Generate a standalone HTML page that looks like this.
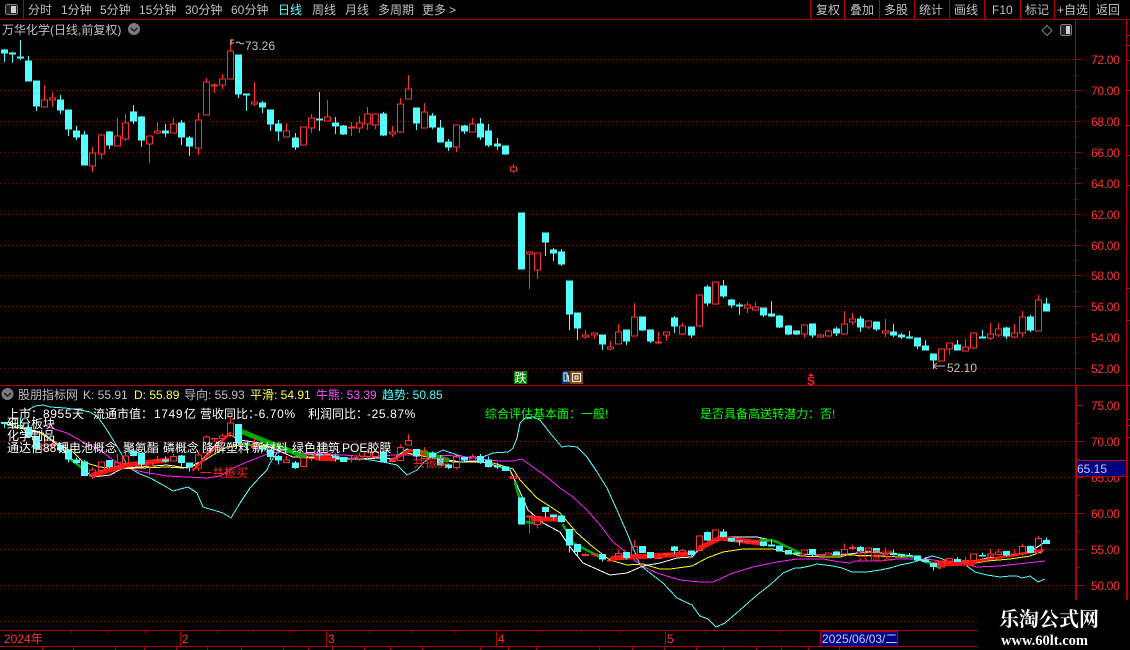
<!DOCTYPE html>
<html><head><meta charset="utf-8"><title>万华化学</title>
<style>
html,body{margin:0;padding:0;background:#000;width:1130px;height:650px;overflow:hidden}
svg{display:block}
text{font-family:"WenQuanYi Zen Hei","Liberation Sans","Noto Sans CJK SC",sans-serif;font-size:12px;white-space:pre}
.g{fill:#c0c0c0}.w{fill:#fff}.r{fill:#ff3232}.y{fill:#ffff54}.m{fill:#ff54ff}.c{fill:#54ffff}.l{fill:#00ff00}
.ln{fill:none;stroke-width:1;shape-rendering:crispEdges}
.gd{stroke:#8a0000;stroke-width:1;stroke-dasharray:1 3;shape-rendering:crispEdges}
.ax{stroke:#b00000;stroke-width:1;fill:none;shape-rendering:crispEdges}
.ns{vector-effect:non-scaling-stroke}
.ls{letter-spacing:.6px}
.al text{letter-spacing:-.3px}
</style></head><body>
<svg width="1130" height="650" viewBox="0 0 1130 650" xmlns="http://www.w3.org/2000/svg">
<rect width="1130" height="650" fill="#000"/>
<!-- grid -->
<path class="gd" d="M0 59.5H1075M0 90.5H1075M0 121.5H1075M0 152.5H1075M0 183.5H1075M0 214.5H1075M0 245.5H1075M0 275.5H1075M0 306.5H1075M0 337.5H1075M0 368.5H1075M0 441.5H1075M0 477.5H1075M0 513.5H1075M0 549.5H1075M0 585.5H1075M0 621.5H1075"/>
<!-- frame -->
<path class="ax" d="M0 19.5H1130M23.5 0V19M810.5 0V19M844.5 0V19M879.5 0V19M914.5 0V19M949.5 0V19M984.5 0V19M1020.5 0V19M1054.5 0V19M1089.5 0V19M1075.5 19V386M1126.5 19V386M0 385.5H1130"/>
<path class="ax" d="M1075 59.5h6M1075 90.5h6M1075 121.5h6M1075 152.5h6M1075 183.5h6M1075 214.5h6M1075 245.5h6M1075 275.5h6M1075 306.5h6M1075 337.5h6M1075 368.5h6M1075 75.5h3M1075 106.5h3M1075 137.5h3M1075 168.5h3M1075 199.5h3M1075 230.5h3M1075 260.5h3M1075 291.5h3M1075 322.5h3M1075 353.5h3M1127 35.5h3M1127 45.5h3M1127 60.5h3M1127 90.5h3M1127 125.5h3M1127 155.5h3M1127 185.5h3M1127 288.5h3M1127 320.5h3"/>
<path d="M1076 386V600M1127 386V600" stroke="#b00000" stroke-width="2" fill="none" shape-rendering="crispEdges"/>
<path class="ax" d="M1076 405.5h8M1076 441.5h8M1076 477.5h8M1076 513.5h8M1076 549.5h8M1076 585.5h8M1076 423.5h4M1076 459.5h4M1076 495.5h4M1076 531.5h4M1076 567.5h4M1127 419.5h3M1127 425.5h3M1127 437.5h3"/>
<!-- toolbar -->
<rect x="5.5" y="4.5" width="12" height="10" rx="2" fill="#222" stroke="#808080"/><rect x="11" y="6" width="5" height="7" fill="#d0d0d0"/>
<g class="g">
<text x="28" y="14">分时</text><text x="61" y="14">1分钟</text><text x="100" y="14">5分钟</text><text x="139" y="14">15分钟</text><text x="185" y="14">30分钟</text><text x="231" y="14">60分钟</text>
<text x="278" y="14" class="c">日线</text><text x="312" y="14">周线</text><text x="345" y="14">月线</text><text x="378" y="14">多周期</text><text x="422" y="14">更多</text><text x="449" y="14">&gt;</text>
<text x="816" y="14">复权</text><text x="850" y="14">叠加</text><text x="884" y="14">多股</text><text x="919" y="14">统计</text><text x="954" y="14">画线</text><text x="992" y="14">F10</text><text x="1025" y="14">标记</text><text x="1057" y="14">+自选</text><text x="1096" y="14">返回</text>
<text x="2" y="34">万华化学(日线,前复权)</text>
</g>
<circle cx="134" cy="29" r="6" fill="#7c7c7c"/><path d="M130.5 28l3.5 3 3.5-3" stroke="#222" stroke-width="1.5" fill="none"/>
<path d="M1047 25.5l5 5-5 5-5-5z" fill="none" stroke="#808080"/>
<rect x="1060.5" y="24.5" width="11" height="11" rx="2" fill="#222" stroke="#808080"/><rect x="1066" y="26" width="4" height="8" fill="#d0d0d0"/>
<!-- lower lines -->
<g class="ln">
<polyline stroke="#54ffff" points="28,410 35,406 43,405 50,407 65,408 80,410 90,412 98,417 107,430 115,443 122,455 128,467 140,474 150,478 163,485 173,491 188,487 197,493 203,507 213,510 223,513 231,518 240,503 250,488 260,477 267,470 270,463 277,453 283,448 290,450 300,453 313,455 330,455 343,458 357,458 370,460 383,462 397,465 407,475 417,470 423,463 433,455 443,450 457,455 470,458 480,458 493,453 508,452 513,448 517,438 520,423 525,418 533,417 540,420 550,433 562,447 568,446 577,447 587,457 597,472 607,488 617,510 627,533 640,565 650,573 663,583 677,598 692,605 700,616 708,619 716,627 725,623 740,610 757,595 770,585 783,573 795,568 800,568 810,566 817,564 825,565 833,566 842,568 852,572 867,572 880,570 890,568 900,565 910,563 917,561 932,556 940,558 950,562 963,563 975,572 987,575 1000,577 1010,576 1017,576 1022,578 1030,576 1038,582 1045,579"/>
<polyline stroke="#ff20ff" points="43,425 57,430 67,433 83,442 100,450 113,460 127,468 143,472 167,476 187,477 207,478 220,476 233,468 247,462 260,457 270,453 280,452 293,453 310,453 343,455 370,457 393,455 427,455 460,456 487,460 500,461 513,461 522,459 533,467 547,477 560,488 573,497 587,510 600,525 613,542 627,553 640,565 657,573 680,580 700,582 713,582 733,573 753,567 777,562 797,559 823,559 840,562 850,563 855,561 880,561 897,559 913,559 927,559 940,561 957,562 977,567 1000,566 1027,563 1045,561"/>
<polyline stroke="#ffff00" points="3,423 20,428 40,433 57,443 73,452 83,462 100,467 117,469 140,468 167,467 183,468 197,465 213,455 227,447 240,445 260,445 277,448 293,453 310,457 327,458 343,459 360,459 377,458 393,459 407,453 417,455 433,458 453,462 473,462 493,463 500,465 513,469 520,480 537,498 560,513 577,533 593,547 610,560 627,565 643,564 660,569 670,569 692,566 707,558 723,552 743,549 773,549 790,553 800,556 825,557 840,557 847,555 880,556 900,557 913,557 927,563 940,565 957,565 970,564 987,561 1010,559 1030,556 1043,551"/>
<polyline stroke="#ffffff" points="20,427 43,433 63,450 80,467 93,477 110,475 123,468 140,467 167,465 187,468 200,462 217,443 230,435 240,440 260,443 277,450 293,457 317,458 340,459 360,459 380,458 393,459 407,449 417,452 437,458 460,462 480,461 500,467 510,470 517,485 528,510 543,523 560,532 570,547 583,563 610,575 627,573 643,566 660,563 677,558 692,557 703,545 720,537 757,537 770,540 787,547 800,554 820,555 840,555 867,552 900,554 917,558 930,562 943,564 967,563 987,558 1013,556 1033,550 1045,542"/>
</g>
<!-- bands -->
<g fill="none" stroke-linecap="round">
<path stroke="#00aa00" stroke-width="5" d="M243 432L260 439L280 447L303 456M420 452L447 460"/>
<path stroke="#00aa00" stroke-width="2.5" d="M67 457L85 470M515 483L520 500M527 522L533 523M563 525L567 532M573 543L600 557M760 540L775 541L800 553M890 553L913 557M923 560L940 568"/>
<path stroke="#ff1010" stroke-width="5" d="M93 475L127 465L167 460M317 458L333 459M533 519L560 519M613 558L687 554M700 548L720 538L760 543M933 564L973 563"/>
<path stroke="#ff1010" stroke-width="2.5" d="M193 470L215 448L230 433M393 460L410 450M973 562L1043 550M410 450L425 455"/>
</g>
<!-- candles -->
<defs><g id="k">
<path class="ns" fill="none" stroke="#ff3232" stroke-width="1" shape-rendering="crispEdges" d="M41.5 100h6v7h-6zM44.5 85V100M49.5 98h6v2h-6zM52.5 92V98M52.5 100V107M89.5 153h6v13h-6zM92.5 147V153M92.5 166V172M98.5 135h6v19h-6zM101.5 134V135M101.5 154V159M114.5 136h6v10h-6zM117.5 118V136M122.5 123h6v16h-6zM125.5 114V123M125.5 139V141M146.5 136h6v8h-6zM149.5 144V163M154.5 131h6v2h-6zM157.5 122V131M157.5 133V134M170.5 124h6v9h-6zM173.5 118V124M195.5 120h6v28h-6zM198.5 113V120M198.5 148V155M203.5 82h6v33h-6zM206.5 78V82M211.5 85h6v1h-6zM214.5 83V85M214.5 86V93M219.5 79h6v6h-6zM222.5 74V79M222.5 85V89M227.5 51h6v28h-6zM230.5 39V51M251.5 102h6v2h-6zM254.5 82V102M254.5 104V106M283.5 131h6v6h-6zM286.5 123V131M300.5 127h6v18h-6zM308.5 118h6v10h-6zM311.5 114V118M311.5 128V133M324.5 117h6v4h-6zM327.5 100V117M348.5 127h6v1h-6zM351.5 122V127M351.5 128V136M356.5 123h6v5h-6zM359.5 116V123M359.5 128V133M364.5 114h6v10h-6zM367.5 107V114M367.5 124V130M372.5 114h6v11h-6zM375.5 125V129M389.5 132h6v2h-6zM392.5 126V132M392.5 134V137M397.5 104h6v28h-6zM400.5 98V104M405.5 89h6v10h-6zM408.5 75V89M421.5 112h6v16h-6zM424.5 103V112M453.5 125h6v22h-6zM456.5 147V152M469.5 124h6v8h-6zM472.5 118V124M510.5 167h6v4h-6zM513.5 164V167M513.5 171V173M526.5 252h6v2h-6zM529.5 254V289M534.5 253h6v17h-6zM537.5 270V279M582.5 335h6v2h-6zM585.5 330V335M585.5 337V339M591.5 333h6v2h-6zM594.5 335V339M607.5 347h6v2h-6zM610.5 341V347M610.5 349V350M615.5 332h6v12h-6zM618.5 324V332M631.5 317h6v19h-6zM634.5 303V317M655.5 342h6v1h-6zM658.5 332V342M658.5 343V344M663.5 332h6v3h-6zM666.5 335V341M679.5 326h6v8h-6zM682.5 323V326M682.5 334V335M696.5 295h6v31h-6zM699.5 326V327M712.5 282h6v22h-6zM715.5 304V305M744.5 305h6v3h-6zM747.5 302V305M747.5 308V313M752.5 307h6v3h-6zM755.5 302V307M801.5 325h6v9h-6zM804.5 334V338M817.5 335h6v2h-6zM820.5 334V335M820.5 337V338M825.5 331h6v5h-6zM828.5 330V331M841.5 324h6v10h-6zM844.5 311V324M849.5 319h6v3h-6zM852.5 313V319M852.5 322V325M865.5 321h6v6h-6zM868.5 327V329M882.5 331h6v2h-6zM885.5 319V331M885.5 333V337M938.5 349h6v12h-6zM946.5 343h6v6h-6zM949.5 349V355M962.5 347h6v4h-6zM965.5 339V347M970.5 333h6v15h-6zM973.5 348V349M987.5 334h6v4h-6zM990.5 323V334M990.5 338V340M995.5 329h6v6h-6zM998.5 323V329M998.5 335V337M1011.5 333h6v4h-6zM1014.5 324V333M1014.5 337V338M1019.5 317h6v16h-6zM1022.5 311V317M1022.5 333V337M1035.5 300h6v31h-6zM1038.5 295V300"/>
<path class="ns" fill="#54ffff" stroke="#54ffff" stroke-width="1" shape-rendering="crispEdges" d="M1.5 50h6v3h-6zM4.5 49V62M9.5 53h6v1h-6zM12.5 52V63M17.5 57h6v1h-6zM20.5 40V60M25.5 61h6v20h-6zM28.5 56V81M33.5 81h6v25h-6zM36.5 81V111M57.5 100h6v10h-6zM60.5 95V114M65.5 110h6v19h-6zM68.5 110V136M73.5 131h6v6h-6zM76.5 126V140M81.5 135h6v30h-6zM84.5 131V165M106.5 132h6v13h-6zM109.5 131V149M130.5 112h6v9h-6zM133.5 105V124M138.5 117h6v23h-6zM141.5 116V147M162.5 131h6v2h-6zM165.5 124V137M178.5 123h6v14h-6zM181.5 120V145M186.5 138h6v8h-6zM189.5 136V156M235.5 55h6v39h-6zM238.5 55V98M243.5 94h6v1h-6zM246.5 94V111M259.5 103h6v4h-6zM262.5 101V113M267.5 110h6v14h-6zM270.5 110V131M275.5 124h6v7h-6zM278.5 120V141M292.5 138h6v9h-6zM295.5 133V150M316.5 119h6v1h-6zM319.5 92V131M332.5 123h6v3h-6zM335.5 117V134M340.5 126h6v8h-6zM343.5 125V135M380.5 114h6v21h-6zM383.5 112V136M413.5 108h6v15h-6zM416.5 108V130M429.5 116h6v11h-6zM432.5 113V129M437.5 128h6v14h-6zM440.5 120V142M445.5 142h6v5h-6zM448.5 139V151M461.5 126h6v5h-6zM464.5 125V134M477.5 124h6v13h-6zM480.5 118V140M485.5 131h6v14h-6zM488.5 124V147M494.5 144h6v2h-6zM497.5 138V150M502.5 146h6v8h-6zM505.5 146V155M518.5 213h6v56h-6zM542.5 233h6v9h-6zM545.5 233V256M550.5 250h6v3h-6zM553.5 248V261M558.5 252h6v12h-6zM561.5 249V266M566.5 281h6v33h-6zM569.5 281V330M574.5 313h6v15h-6zM577.5 313V340M599.5 335h6v9h-6zM602.5 335V350M623.5 330h6v11h-6zM626.5 330V345M639.5 317h6v13h-6zM642.5 317V331M647.5 330h6v11h-6zM650.5 330V343M671.5 318h6v8h-6zM674.5 316V333M688.5 327h6v8h-6zM691.5 327V338M704.5 287h6v16h-6zM707.5 285V306M720.5 286h6v10h-6zM723.5 280V298M728.5 300h6v5h-6zM731.5 299V308M736.5 305h6v1h-6zM739.5 303V315M760.5 308h6v7h-6zM763.5 308V317M768.5 314h6v2h-6zM771.5 301V317M776.5 316h6v11h-6zM779.5 315V328M785.5 326h6v8h-6zM788.5 325V335M793.5 331h6v3h-6zM796.5 331V335M809.5 324h6v11h-6zM812.5 324V338M833.5 329h6v4h-6zM836.5 327V336M857.5 319h6v8h-6zM860.5 316V332M873.5 322h6v7h-6zM876.5 322V331M890.5 332h6v3h-6zM893.5 324V337M898.5 335h6v2h-6zM901.5 333V339M906.5 337h6v1h-6zM909.5 331V339M914.5 338h6v8h-6zM917.5 338V349M922.5 346h6v4h-6zM925.5 340V350M930.5 354h6v6h-6zM933.5 354V369M954.5 345h6v5h-6zM957.5 340V350M979.5 337h6v1h-6zM982.5 330V338M1003.5 328h6v8h-6zM1006.5 327V339M1027.5 317h6v13h-6zM1030.5 315V332M1043.5 304h6v7h-6zM1046.5 298V311"/>
</g></defs>
<use href="#k"/>
<use href="#k" transform="matrix(1 0 0 .4645 0 399.1)"/>
<!-- marks -->
<path d="M231 45V40M231 40h3M231 43h3M236 43q2-2 4 0t4 0" fill="none" stroke="#c0c0c0"/>
<text class="g" x="245" y="50">73.26</text>
<path d="M933 366h12M933 366l4-3M933 366l4 3" fill="none" stroke="#c0c0c0"/>
<text class="g" x="947" y="372">52.10</text>
<rect x="514" y="371" width="13" height="13" fill="#008000"/><text class="w" x="514.5" y="382">跌</text>
<rect x="562" y="371" width="9" height="13" fill="#003a70"/><path d="M564 373v8h3v-8zM568 375l1 7" stroke="#fff" fill="none"/>
<rect x="570" y="371" width="13" height="13" fill="#8a4a14"/><rect x="572.5" y="373.5" width="8" height="8" fill="none" stroke="#fff"/><rect x="575" y="376" width="3" height="3" fill="none" stroke="#fff"/>
<text x="807" y="385" fill="#ff2020" style="font-weight:bold">S</text><path d="M808 376l3-3 3 3z" fill="#ff2020"/>
<!-- axis labels -->
<g class="r al">
<text x="1091" y="64">72.00</text><text x="1091" y="95">70.00</text><text x="1091" y="126">68.00</text><text x="1091" y="157">66.00</text><text x="1091" y="188">64.00</text><text x="1091" y="219">62.00</text><text x="1091" y="250">60.00</text><text x="1091" y="280">58.00</text><text x="1091" y="311">56.00</text><text x="1091" y="342">54.00</text><text x="1091" y="373">52.00</text>
<text x="1091" y="410">75.00</text><text x="1091" y="446">70.00</text><text x="1091" y="482">65.00</text><text x="1091" y="518">60.00</text><text x="1091" y="554">55.00</text><text x="1091" y="590">50.00</text>
</g>
<rect x="1077" y="460" width="49" height="17" fill="#000080"/><path class="ax" d="M1077 460.5h49M1077 476.5h49" stroke="#ff2020"/><text x="1077" y="473" fill="#c8c8ff">65.15</text>
<!-- lower header -->
<circle cx="7.5" cy="394" r="6" fill="#7c7c7c"/><path d="M4 393l3.5 3 3.5-3" stroke="#222" stroke-width="1.5" fill="none"/>
<text class="g" x="18" y="399">股朋指标网</text><text class="g" x="83" y="399">K: 55.91</text><text class="y" x="134" y="399">D: 55.89</text><text class="g" x="184" y="399">导向: 55.93</text><text class="y" x="250" y="399">平滑: 54.91</text><text class="m" x="316" y="399">牛熊: 53.39</text><text class="c" x="382" y="399">趋势: 50.85</text>
<g class="w">
<text x="7" y="418">上市：</text><text class="ls" x="43" y="418">8955</text><text x="72" y="418">天</text>
<text x="93" y="418">流通市值：</text><text class="ls" x="154" y="418">1749</text><text x="184" y="418">亿</text>
<text x="200" y="418">营收同比：</text><text class="ls" x="254" y="418">-6.70%</text>
<text x="308" y="418">利润同比：</text><text class="ls" x="367" y="418">-25.87%</text>
<text x="7" y="428">细分板块</text><text x="7" y="440">化学制品</text>
<text x="7" y="452">通达信88</text><text x="57" y="452">锂电池概念</text><text x="123" y="452">聚氨酯</text><text x="163" y="452">磷概念</text><text x="202" y="452">降解塑料</text><text x="252" y="452">新材料</text><text x="292" y="452">绿色建筑</text><text x="342" y="452">POE胶膜</text>
</g>
<text class="l" x="485" y="418">综合评估基本面：一般!</text><text class="l" x="700" y="418">是否具备高送转潜力：否!</text>
<g fill="#ff2020"><text x="200" y="477">一共振买</text><text x="413" y="467">共振买</text><text x="857" y="560">共振买</text></g>
<!-- date axis -->
<path class="ax" d="M0 630.5H978M0 646.5H978M180.5 631V646M326.5 631V646M496.5 631V646M665.5 631V646M71.5 631v2M108.5 631v2M144.5 631v2M217.5 631v2M253.5 631v2M290.5 631v2M369.5 631v2M411.5 631v2M454.5 631v2M538.5 631v2M581.5 631v2M620.5 631v2M705.5 631v2M741.5 631v2M780.5 631v2M42.5 647v3M73.5 647v3M115.5 647v3M144.5 647v3M176.5 647v3M207.5 647v3M241.5 647v3M283.5 647v3M308.5 647v3M332.5 647v3M364.5 647v3M390.5 647v3M422.5 647v3M480.5 647v3M508.5 647v3M536.5 647v3M599.5 647v3M632.5 647v3M664.5 647v3M696.5 647v3M723.5 647v3M756.5 647v3M781.5 647v3M808.5 647v3M839.5 647v3"/>
<text class="r" x="4" y="643">2024年</text><text class="r" x="182" y="643">2</text><text class="r" x="328" y="643">3</text><text class="r" x="498" y="643">4</text><text class="r" x="667" y="643">5</text>
<rect x="820.5" y="631.5" width="77" height="15" fill="#000080" stroke="#b00000"/><text x="822" y="643" fill="#c8c8ff">2025/06/03/二</text>
<!-- watermark -->
<rect x="978" y="601" width="152" height="49" fill="#000"/>
<text x="999" y="626" fill="#fff" style="font-family:'Noto Serif CJK SC','Liberation Serif',serif;font-size:20px;font-weight:bold">乐淘公式网</text>
<text x="1001" y="645" fill="#fff" style="font-family:'Liberation Serif',serif;font-size:14.5px;font-weight:bold">www.60lt.com</text>
</svg>
</body></html>
